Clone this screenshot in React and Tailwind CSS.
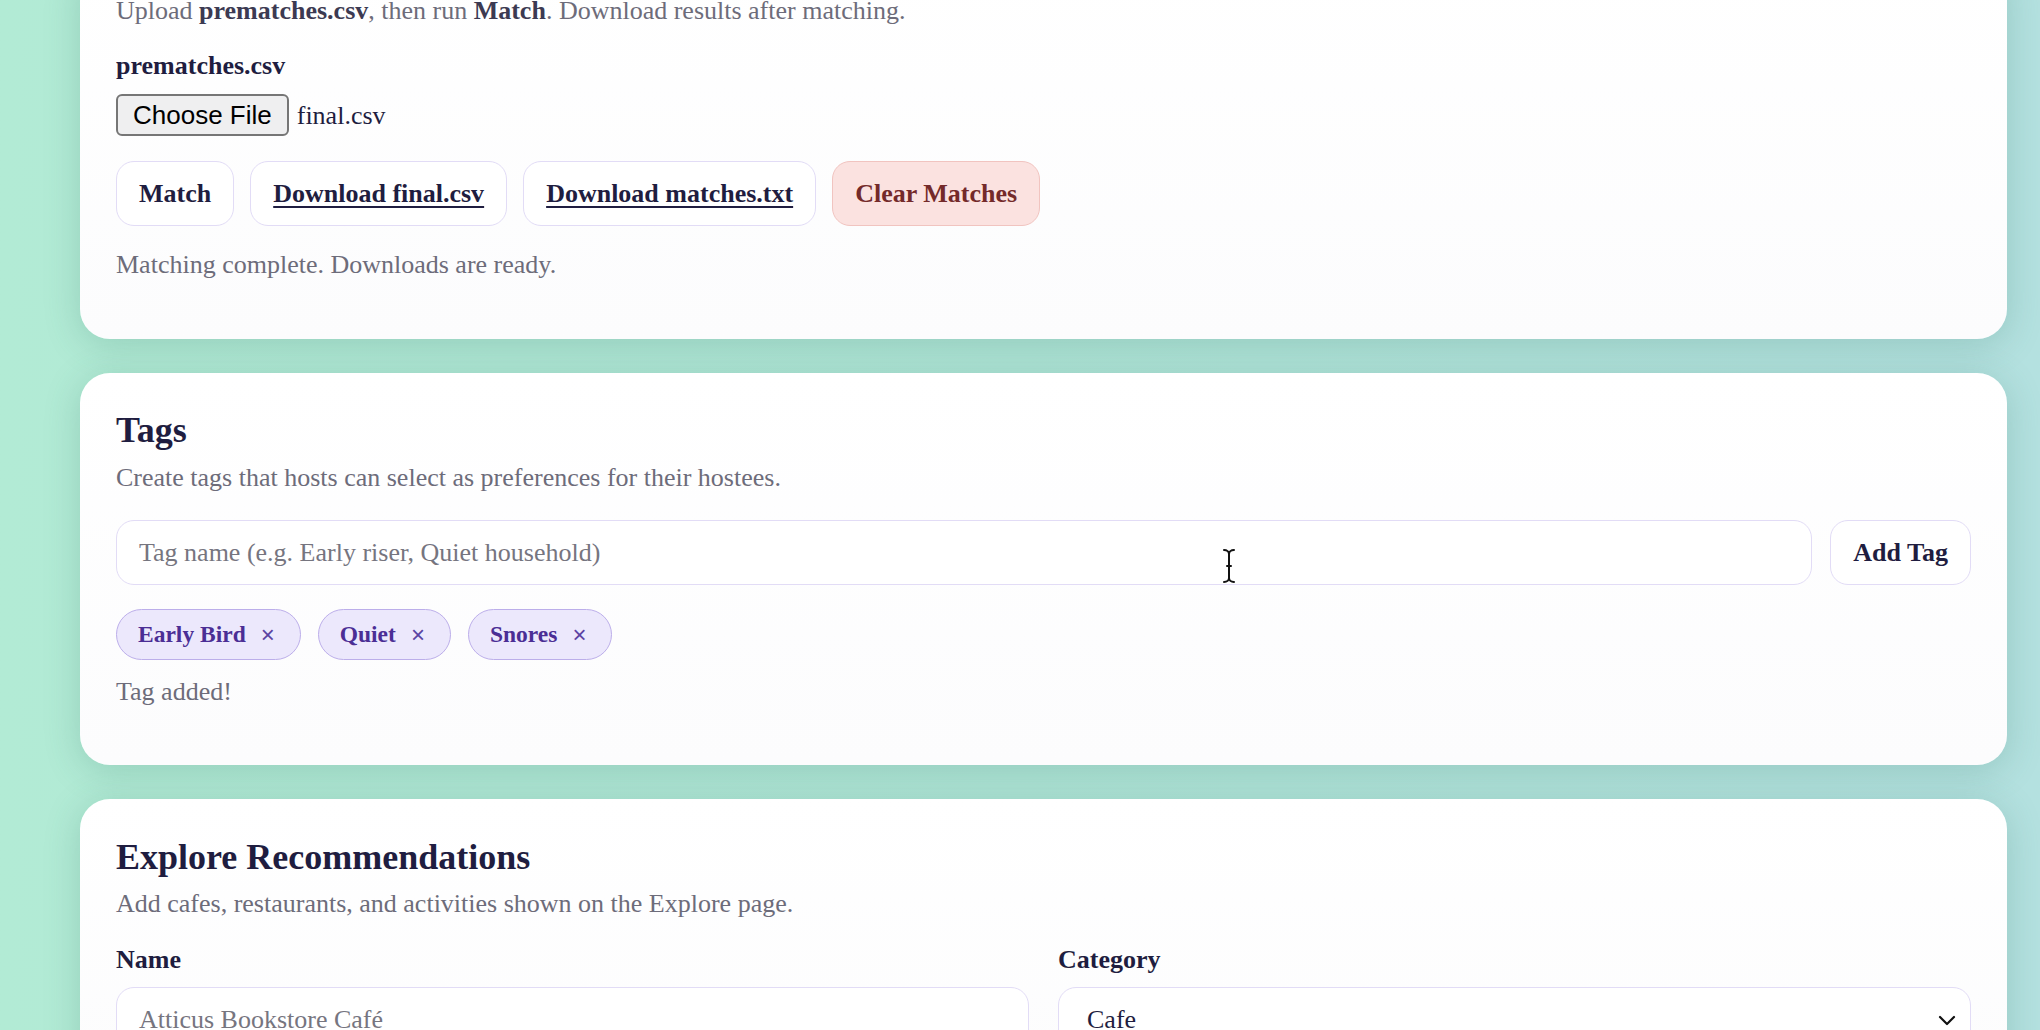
import React from 'react';

const serif = "font-['Liberation_Serif','Times_New_Roman',serif]";

const Card = ({ className = '', children }) => (
    <div className={`bg-linear-to-b from-white to-[#fcfcfd] rounded-[30px] px-[36px] shadow-[0_6px_36px_rgba(40,110,90,0.22)] ${className}`}>
        {children}
    </div>
);

const OutlineButton = ({ children, underline }) => (
    <button className={`h-[65px] px-[22px] rounded-[18px] border-[1.5px] border-[#e2dcf6] bg-white text-[26px] font-bold text-[#1f1d40] ${underline ? 'underline decoration-[2px] underline-offset-[4px]' : ''}`}>
        {children}
    </button>
);

const Chip = ({ label }) => (
    <span className="h-[51px] flex items-center gap-[15px] pl-[21px] pr-[25px] rounded-full border-[1.5px] border-[#bcaeea] bg-[#ece8fc]">
        <span className="text-[23.5px] font-bold text-[#4b2e95]">{label}</span>
        <span className="text-[24px] font-['Liberation_Sans',sans-serif] font-light text-[#5b43a3] leading-none">×</span>
    </span>
);

const App = () => {
    return (
        <div className={`relative h-[1030px] overflow-hidden bg-linear-to-r from-[#b2ebd5] via-[#b0e5d7] to-[#b4e1e0] pl-[80px] pr-[33px] ${serif}`}>
            <div className="flex flex-col gap-[34px] -mt-[39px]">
                {/* Matching card */}
                <Card className="pt-[35px] pb-[59px]">
                    <p className="text-[26px] leading-[30px] text-[#6d6c7a]">
                        Upload <b className="text-[#3c3a52]">prematches.csv</b>, then run <b className="text-[#3c3a52]">Match</b>. Download results after matching.
                    </p>
                    <div className="mt-[25px] text-[26px] leading-[30px] font-bold text-[#1f1d40]">prematches.csv</div>
                    <div className="mt-[13px] flex items-center gap-[8px]">
                        <button className="h-[42px] px-[15px] rounded-[6px] border-[2px] border-[#767676] bg-[#efeff0] font-['Liberation_Sans',Arial,sans-serif] text-[26px] leading-none text-black">
                            Choose File
                        </button>
                        <span className="text-[26px] text-[#1f1d40]">final.csv</span>
                    </div>
                    <div className="mt-[25px] flex gap-[16px]">
                        <OutlineButton>Match</OutlineButton>
                        <OutlineButton underline>Download final.csv</OutlineButton>
                        <OutlineButton underline>Download matches.txt</OutlineButton>
                        <button className="h-[65px] px-[22px] rounded-[18px] border-[1.5px] border-[#f1c4c0] bg-[#fbe2e0] text-[26px] font-bold text-[#742a2a]">
                            Clear Matches
                        </button>
                    </div>
                    <p className="mt-[24px] text-[26px] leading-[30px] text-[#6d6c7a]">Matching complete. Downloads are ready.</p>
                </Card>

                {/* Tags card */}
                <Card className="pt-[37px] pb-[58px]">
                    <h2 className="text-[36px] leading-[40px] font-bold text-[#1f1d40]">Tags</h2>
                    <p className="mt-[13px] text-[26px] leading-[30px] text-[#6d6c7a]">
                        Create tags that hosts can select as preferences for their hostees.
                    </p>
                    <div className="mt-[27px] flex gap-[18px]">
                        <div className="flex-1 h-[65px] flex items-center px-[22px] rounded-[18px] border-[1.5px] border-[#e2dcf6] bg-white">
                            <span className="text-[26px] text-[#76757f]">Tag name (e.g. Early riser, Quiet household)</span>
                        </div>
                        <OutlineButton>Add Tag</OutlineButton>
                    </div>
                    <div className="mt-[24px] flex gap-[17px]">
                        <Chip label="Early Bird" />
                        <Chip label="Quiet" />
                        <Chip label="Snores" />
                    </div>
                    <p className="mt-[17px] text-[26px] leading-[30px] text-[#6d6c7a]">Tag added!</p>
                </Card>

                {/* Explore card */}
                <Card className="pt-[38px] pb-[40px]">
                    <h2 className="text-[36px] leading-[40px] font-bold text-[#1f1d40]">Explore Recommendations</h2>
                    <p className="mt-[12px] text-[26px] leading-[30px] text-[#6d6c7a]">
                        Add cafes, restaurants, and activities shown on the Explore page.
                    </p>
                    <div className="mt-[26px] grid grid-cols-2 gap-x-[29px]">
                        <div>
                            <div className="text-[26px] leading-[30px] font-bold text-[#1f1d40]">Name</div>
                            <div className="mt-[12px] h-[65px] flex items-center px-[22px] rounded-[18px] border-[1.5px] border-[#e2dcf6] bg-white">
                                <span className="text-[26px] text-[#76757f]">Atticus Bookstore Café</span>
                            </div>
                        </div>
                        <div>
                            <div className="text-[26px] leading-[30px] font-bold text-[#1f1d40]">Category</div>
                            <div className="mt-[12px] h-[65px] flex items-center justify-between pl-[28px] pr-[14px] rounded-[18px] border-[1.5px] border-[#e2dcf6] bg-white">
                                <span className="text-[26px] text-[#1f1d40]">Cafe</span>
                                <svg width="18" height="12" viewBox="0 0 18 12" fill="none" stroke="#111" strokeWidth="2.2" strokeLinecap="round" strokeLinejoin="round">
                                    <path d="M2 3l7 7 7-7" />
                                </svg>
                            </div>
                        </div>
                    </div>
                </Card>
            </div>

            {/* mouse cursor */}
            <svg className="absolute left-[1220px] top-[548px]" width="18" height="36" viewBox="0 0 18 36" fill="none" stroke="#111" strokeWidth="2" strokeLinecap="round">
                <path d="M4 2c3 0 5 2 5 4c0-2 2-4 5-4" />
                <path d="M9 6v24" />
                <path d="M4 34c3 0 5-2 5-4c0 2 2 4 5 4" />
                <path d="M7 18h4" />
            </svg>
        </div>
    );
};

export default App;
